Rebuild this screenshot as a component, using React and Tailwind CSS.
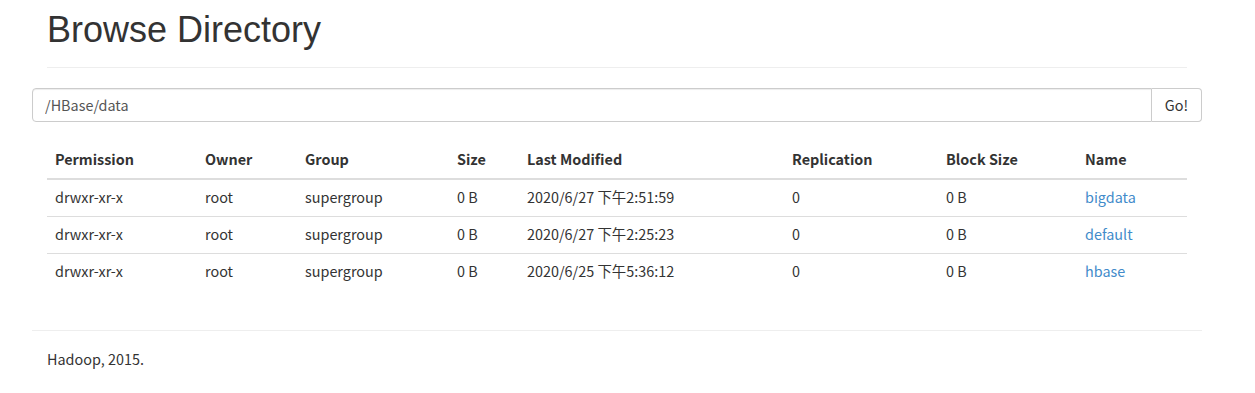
import React from 'react';

const rows = [
  { perm: 'drwxr-xr-x', owner: 'root', group: 'supergroup', size: '0 B', modified: '2020/6/27 下午2:51:59', repl: '0', block: '0 B', name: 'bigdata' },
  { perm: 'drwxr-xr-x', owner: 'root', group: 'supergroup', size: '0 B', modified: '2020/6/27 下午2:25:23', repl: '0', block: '0 B', name: 'default' },
  { perm: 'drwxr-xr-x', owner: 'root', group: 'supergroup', size: '0 B', modified: '2020/6/25 下午5:36:12', repl: '0', block: '0 B', name: 'hbase' },
];

const cols = ['Permission', 'Owner', 'Group', 'Size', 'Last Modified', 'Replication', 'Block Size', 'Name'];
const widths = ['w-[150px]', 'w-[100px]', 'w-[152px]', 'w-[70px]', 'w-[265px]', 'w-[154px]', 'w-[139px]', 'w-[110px]'];

const App = () => {
  return (
    <div className="min-h-screen bg-white text-[#333] text-[14.4px] font-['Noto_Sans_CJK_SC',sans-serif]">
      <div className="w-[1170px] ml-[32px] pt-[10px]">
        <div className="mx-[15px] pb-[17px] border-b border-[#eee]">
          <h1 className="text-[36px] leading-[40px] font-['Liberation_Sans',Arial,sans-serif] font-normal">
            Browse Directory
          </h1>
        </div>

        <div className="mt-[20px] flex h-[34px]">
          <input
            type="text"
            defaultValue="/HBase/data"
            className="flex-1 h-full border border-[#ccc] rounded-l-[4px] px-[12px] pb-[1px] text-[14.4px] text-[#555] outline-none shadow-[inset_0_1px_1px_rgba(0,0,0,0.075)]"
          />
          <button className="w-[50px] h-full border border-l-0 border-[#ccc] rounded-r-[4px] bg-white text-[#333] text-[14.4px] pb-[1px]">
            Go!
          </button>
        </div>

        <div className="mx-[15px] mt-[20px]">
          <table className="w-full table-fixed border-collapse">
            <thead>
              <tr className="border-b-2 border-[#ddd]">
                {cols.map((c, i) => (
                  <th key={c} className={`${widths[i]} text-left font-bold px-[8px] pt-[7px] pb-[9px] leading-[20px]`}>
                    {c}
                  </th>
                ))}
              </tr>
            </thead>
            <tbody>
              {rows.map((r, i) => (
                <tr key={r.name} className={i > 0 ? 'border-t border-[#ddd]' : ''}>
                  <td className="px-[8px] pt-[7px] pb-[9px] leading-[20px]">{r.perm}</td>
                  <td className="px-[8px] pt-[7px] pb-[9px] leading-[20px]">{r.owner}</td>
                  <td className="px-[8px] pt-[7px] pb-[9px] leading-[20px]">{r.group}</td>
                  <td className="px-[8px] pt-[7px] pb-[9px] leading-[20px]">{r.size}</td>
                  <td className="px-[8px] pt-[7px] pb-[9px] leading-[20px]">{r.modified}</td>
                  <td className="px-[8px] pt-[7px] pb-[9px] leading-[20px]">{r.repl}</td>
                  <td className="px-[8px] pt-[7px] pb-[9px] leading-[20px]">{r.block}</td>
                  <td className="px-[8px] pt-[7px] pb-[9px] leading-[20px]">
                    <a href="#" className="text-[#428bca]">{r.name}</a>
                  </td>
                </tr>
              ))}
            </tbody>
          </table>
        </div>

        <div className="mt-[40px] border-t border-[#eee] pt-[18px] px-[15px] leading-[20px]">
          Hadoop, 2015.
        </div>
      </div>
    </div>
  );
};

export default App;
